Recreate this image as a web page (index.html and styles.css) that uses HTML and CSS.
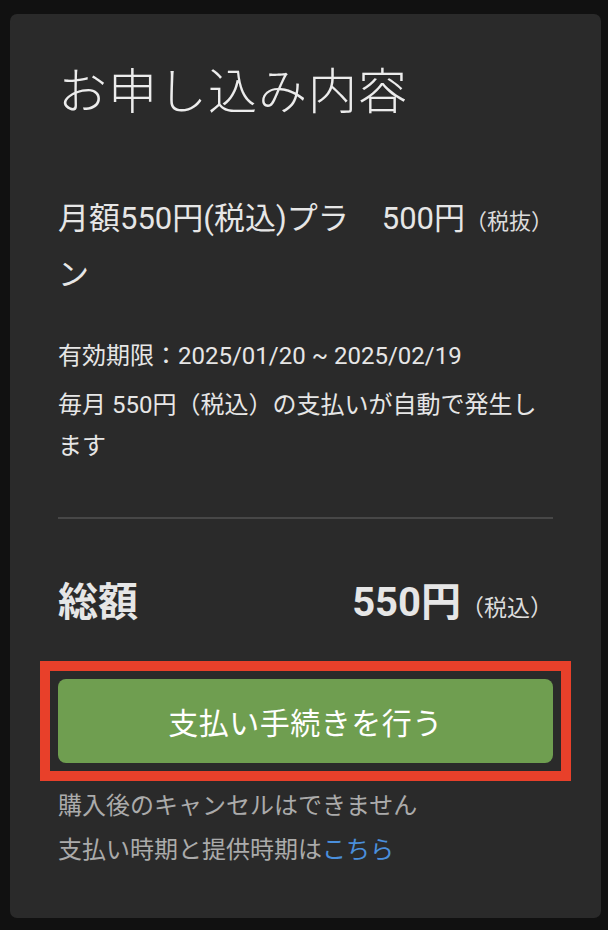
FILE: index.html
```html
<!DOCTYPE html>
<html lang="ja">
<head>
<meta charset="utf-8">
<title>お申し込み内容</title>
<link rel="stylesheet" href="styles.css">
</head>
<body>
<main class="card">
  <h1 class="title">お申し込み内容</h1>
  <div class="plan">
    <div class="plan-name">月額550円(税込)プラン</div>
    <div class="plan-price"><span class="plan-amount">500円</span><span class="tax-small">（税抜）</span></div>
  </div>
  <p class="period">有効期限：2025/01/20 ~ 2025/02/19</p>
  <p class="auto">毎月 550円（税込）の支払いが自動で発生します</p>
  <hr class="divider">
  <div class="total">
    <div class="total-label">総額</div>
    <div class="total-price"><span class="total-amount">550円</span><span class="tax-small">（税込）</span></div>
  </div>
  <div class="highlight">
    <button class="pay-button" type="button">支払い手続きを行う</button>
  </div>
  <div class="notes">
    <p class="note">購入後のキャンセルはできません</p>
    <p class="note">支払い時期と提供時期は<a class="link" href="#">こちら</a></p>
  </div>
</main>
</body>
</html>
```

FILE: styles.css
```css
html, body {
  margin: 0;
  padding: 0;
  background: #111111;
}
body {
  padding: 14px 7px 12px 10px;
  font-family: Roboto, "Noto Sans CJK JP", sans-serif;
  color: #e6e6e6;
}
.card {
  display: block;
  background: #2a2a2a;
  border-radius: 7px;
  padding: 45px 48px 46px 48px;
  box-sizing: border-box;
  min-height: 904px;
}
.title {
  margin: 0;
  font-size: 49px;
  font-weight: 300;
  line-height: 68px;
  color: #ececec;
  letter-spacing: 1px;
}
.plan {
  margin-top: 64px;
  display: flex;
  align-items: baseline;
  gap: 16px;
}
.plan-name {
  flex: 1;
  min-width: 0;
  font-size: 31px;
  line-height: 56px;
}
.plan-price {
  white-space: nowrap;
}
.plan-amount {
  font-size: 31px;
  line-height: 56px;
}
.tax-small {
  font-size: 22px;
  color: #dcdcdc;
}
.period {
  margin: 33px 0 0 0;
  font-size: 24px;
  line-height: 41px;
}
.auto {
  margin: 8px 0 0 0;
  font-size: 24px;
  line-height: 41px;
}
.divider {
  margin: 50px 0 0 0;
  border: 0;
  height: 2px;
  background: #474747;
}
.total {
  margin-top: 54px;
  display: flex;
  align-items: baseline;
  justify-content: space-between;
}
.total-label {
  font-size: 40px;
  font-weight: 700;
  line-height: 60px;
}
.total-amount {
  font-size: 40px;
  font-weight: 700;
  line-height: 60px;
}
.total-price .tax-small {
  font-size: 23px;
}
.highlight {
  margin: 28px -18px 0 -18px;
  border: 10px solid #e8402a;
  padding: 8px;
}
.pay-button {
  display: block;
  width: 100%;
  height: 84px;
  border: 0;
  border-radius: 8px;
  background: #6f9e50;
  color: #ffffff;
  font-family: Roboto, "Noto Sans CJK JP", sans-serif;
  font-size: 30px;
  font-weight: 400;
  letter-spacing: 0.5px;
  cursor: pointer;
}
.notes {
  margin-top: 3px;
}
.note {
  margin: 0;
  font-size: 24px;
  line-height: 44px;
  color: #ababab;
}
.link {
  color: #4a8fdc;
  text-decoration: none;
}
```
